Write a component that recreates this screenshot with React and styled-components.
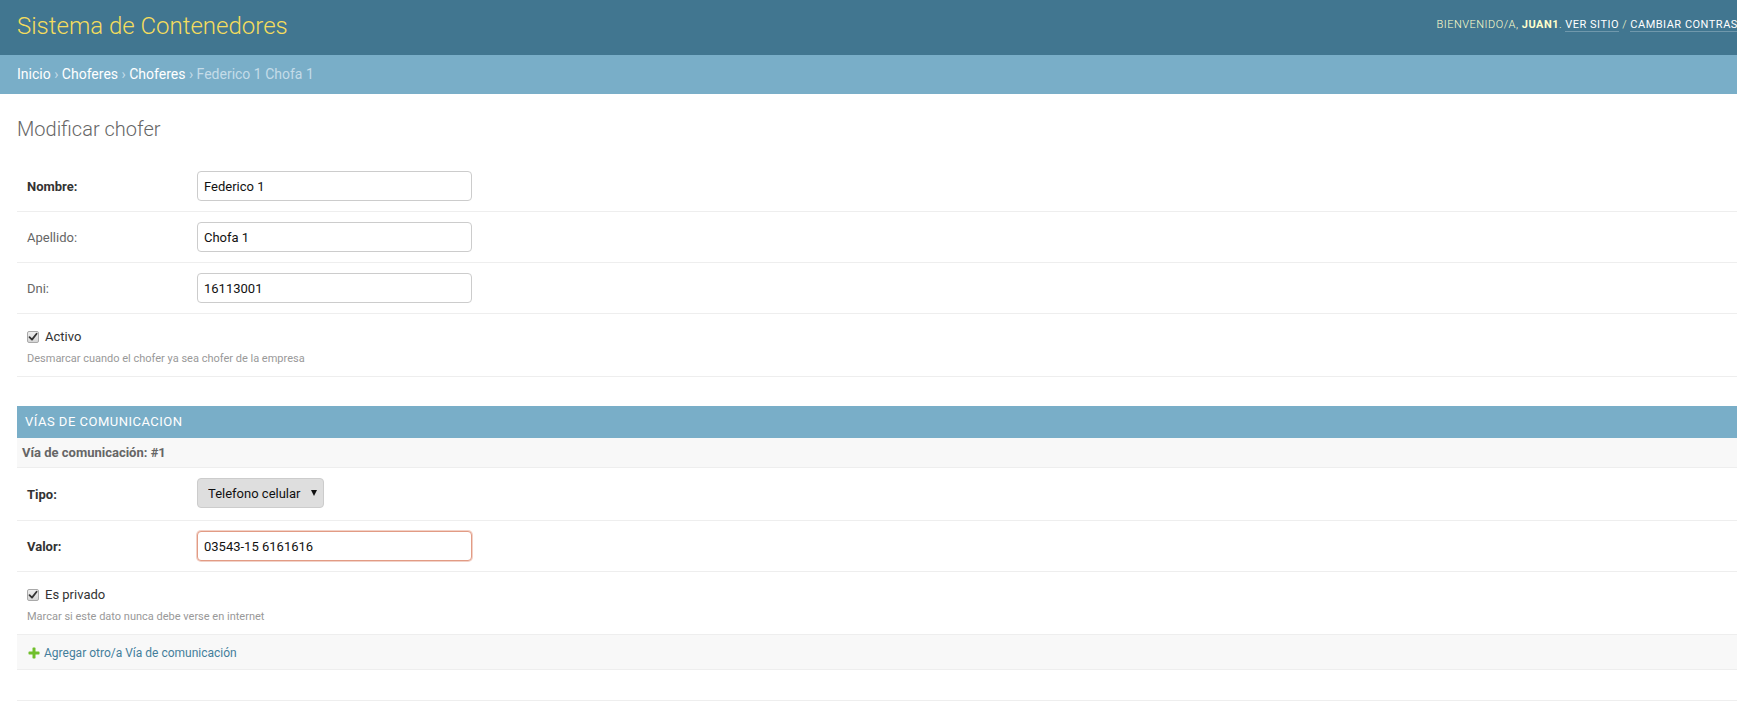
import React from "react";
import styled, { createGlobalStyle } from "styled-components";

const GlobalStyle = createGlobalStyle`
  html, body {
    margin: 0;
    padding: 0;
    overflow: hidden;
    background: #fff;
  }
  body {
    font-family: Roboto, "Lucida Grande", "DejaVu Sans", sans-serif;
    font-size: 14px;
    color: #333;
  }
  * { box-sizing: border-box; }
`;

const Page = styled.div`
  min-width: 1891px;
`;

const Header = styled.header`
  display: flex;
  align-items: flex-start;
  justify-content: space-between;
  height: 55px;
  padding: 10px 17px 0;
  background: #417690;
  color: #ffc;
  overflow: hidden;
`;

const Branding = styled.h1`
  margin: 0;
  font-size: 24px;
  line-height: 32px;
  font-weight: 300;
  color: #f5dd5d;
  white-space: nowrap;
`;

const UserTools = styled.div`
  margin-top: 5px;
  font-size: 11px;
  line-height: 20px;
  letter-spacing: 0.5px;
  text-transform: uppercase;
  white-space: nowrap;
  font-weight: 300;
  color: #ffc;

  strong {
    font-weight: 700;
  }
`;

const ToolLink = styled.a`
  color: #fff;
  text-decoration: none;
  border-bottom: 1px solid rgba(255, 255, 255, 0.25);
  font-weight: 400;
`;

const Breadcrumbs = styled.nav`
  background: #79aec8;
  padding: 10px 17px;
  font-size: 14px;
  line-height: 19px;
  color: #c4dce8;
  white-space: nowrap;
`;

const Crumb = styled.a`
  color: #fff;
  text-decoration: none;
`;

const Content = styled.main`
  padding: 23px 17px 0;
`;

const Title = styled.h1`
  margin: 0 0 20px;
  font-size: 20px;
  line-height: 24px;
  font-weight: 300;
  color: #666;
`;

const Fieldset = styled.fieldset`
  margin: 0;
  padding: 0;
  border: none;
  min-width: 0;
`;

const FormRow = styled.div`
  display: flex;
  align-items: center;
  padding: 10px;
  border-bottom: 1px solid #eee;
  font-size: 13px;
`;

const FieldLabel = styled.label`
  flex: 0 0 170px;
  padding-right: 10px;
  font-size: 13px;
  color: ${(p) => (p.$required ? "#333" : "#666")};
  font-weight: ${(p) => (p.$required ? 700 : 400)};
`;

const TextInput = styled.input`
  width: 275px;
  height: 30px;
  padding: 0 6px;
  margin: 0;
  font-family: Roboto, "DejaVu Sans", sans-serif;
  font-size: 13px;
  color: #111;
  background: #fff;
  border: 1px solid ${(p) => (p.$focused ? "#e29b84" : "#ccc")};
  border-radius: 4px;
  box-shadow: ${(p) => (p.$focused ? "0 0 0 1px rgba(226, 155, 132, 0.45)" : "none")};
  outline: none;
`;

const SelectWrap = styled.div`
  position: relative;
  display: inline-block;
  margin-bottom: 2px;

  &::after {
    content: "";
    position: absolute;
    right: 7px;
    top: 12px;
    border-left: 3px solid transparent;
    border-right: 3px solid transparent;
    border-top: 6px solid #111;
    pointer-events: none;
  }
`;

const Select = styled.select`
  appearance: none;
  -webkit-appearance: none;
  width: 127px;
  height: 30px;
  padding: 0 20px 0 10px;
  margin: 0;
  font-family: Roboto, "DejaVu Sans", sans-serif;
  font-size: 13px;
  color: #111;
  background: #dedede;
  border: 1px solid #ccc;
  border-radius: 4px;
  outline: none;
`;

const CheckRow = styled.div`
  padding: 10px;
  border-bottom: 1px solid #eee;
`;

const CheckLine = styled.label`
  display: flex;
  align-items: center;
  height: 25px;
  font-size: 13px;
  color: #333;
`;

const CheckBox = styled.span`
  display: inline-flex;
  align-items: center;
  justify-content: center;
  width: 12px;
  height: 12px;
  margin-right: 6px;
  border: 1px solid #a9a9a9;
  border-radius: 2px;
  background: linear-gradient(#eee, #d6d6d6);
`;

const Help = styled.p`
  margin: 3px 0 0;
  font-size: 11px;
  line-height: 14px;
  color: #999;
`;

const InlineGroup = styled.div`
  margin-top: 29px;
`;

const ModuleTitle = styled.h2`
  margin: 0;
  padding: 8px;
  font-size: 13px;
  line-height: 16px;
  font-weight: 400;
  letter-spacing: 0.5px;
  text-transform: uppercase;
  color: #fff;
  background: #79aec8;
`;

const InlineHeading = styled.h3`
  margin: 0;
  padding: 5px;
  font-size: 13px;
  line-height: 19px;
  font-weight: 700;
  color: #666;
  background: #f8f8f8;
  border-bottom: 1px solid #eee;
`;

const AddRow = styled.div`
  display: flex;
  align-items: center;
  gap: 3px;
  padding: 9px 10px 7px;
  font-size: 12px;
  line-height: 18px;
  background: #f8f8f8;
  border-bottom: 1px solid #eee;
`;

const AddLink = styled.a`
  color: #447e9b;
  text-decoration: none;
`;

const SubmitDivider = styled.div`
  margin-top: 30px;
  border-top: 1px solid #eee;
  height: 20px;
`;

const Check = () => (
  <CheckBox>
    <svg width="10" height="10" viewBox="0 0 10 10">
      <path d="M1.5 5.2 L4 7.6 L8.6 1.8" fill="none" stroke="#333" strokeWidth="1.8" strokeLinecap="round" strokeLinejoin="round" />
    </svg>
  </CheckBox>
);

const PlusIcon = () => (
  <svg width="14" height="14" viewBox="0 0 1792 1792" aria-hidden="true">
    <path
      fill="#70bf2b"
      d="M1600 796v192q0 40-28 68t-68 28h-416v416q0 40-28 68t-68 28h-192q-40 0-68-28t-28-68v-416h-416q-40 0-68-28t-28-68v-192q0-40 28-68t68-28h416v-416q0-40 28-68t68-28h192q40 0 68 28t28 68v416h416q40 0 68 28t28 68z"
    />
  </svg>
);

export default function App() {
  return (
    <Page>
      <GlobalStyle />
      <Header>
        <Branding>Sistema de Contenedores</Branding>
        <UserTools>
          Bienvenido/a, <strong>juan1</strong>. <ToolLink href="#">Ver sitio</ToolLink> /{" "}
          <ToolLink href="#">Cambiar contraseña</ToolLink> / <ToolLink href="#">Terminar sesión</ToolLink>
        </UserTools>
      </Header>
      <Breadcrumbs>
        <Crumb href="#">Inicio</Crumb> › <Crumb href="#">Choferes</Crumb> ›{" "}
        <Crumb href="#">Choferes</Crumb> › Federico 1 Chofa 1
      </Breadcrumbs>
      <Content>
        <Title>Modificar chofer</Title>
        <Fieldset>
          <FormRow>
            <FieldLabel $required>Nombre:</FieldLabel>
            <TextInput defaultValue="Federico 1" />
          </FormRow>
          <FormRow>
            <FieldLabel>Apellido:</FieldLabel>
            <TextInput defaultValue="Chofa 1" />
          </FormRow>
          <FormRow>
            <FieldLabel>Dni:</FieldLabel>
            <TextInput defaultValue="16113001" />
          </FormRow>
          <CheckRow>
            <CheckLine>
              <Check />
              Activo
            </CheckLine>
            <Help>Desmarcar cuando el chofer ya sea chofer de la empresa</Help>
          </CheckRow>
        </Fieldset>
        <InlineGroup>
          <ModuleTitle>Vías de comunicacion</ModuleTitle>
          <InlineHeading>Vía de comunicación: #1</InlineHeading>
          <FormRow>
            <FieldLabel $required>Tipo:</FieldLabel>
            <SelectWrap>
              <Select defaultValue="cel">
                <option value="cel">Telefono celular</option>
                <option value="fijo">Telefono fijo</option>
                <option value="mail">Email</option>
              </Select>
            </SelectWrap>
          </FormRow>
          <FormRow>
            <FieldLabel $required>Valor:</FieldLabel>
            <TextInput $focused defaultValue="03543-15 6161616" />
          </FormRow>
          <CheckRow>
            <CheckLine>
              <Check />
              Es privado
            </CheckLine>
            <Help>Marcar si este dato nunca debe verse en internet</Help>
          </CheckRow>
          <AddRow>
            <PlusIcon />
            <AddLink href="#">Agregar otro/a Vía de comunicación</AddLink>
          </AddRow>
        </InlineGroup>
        <SubmitDivider />
      </Content>
    </Page>
  );
}
